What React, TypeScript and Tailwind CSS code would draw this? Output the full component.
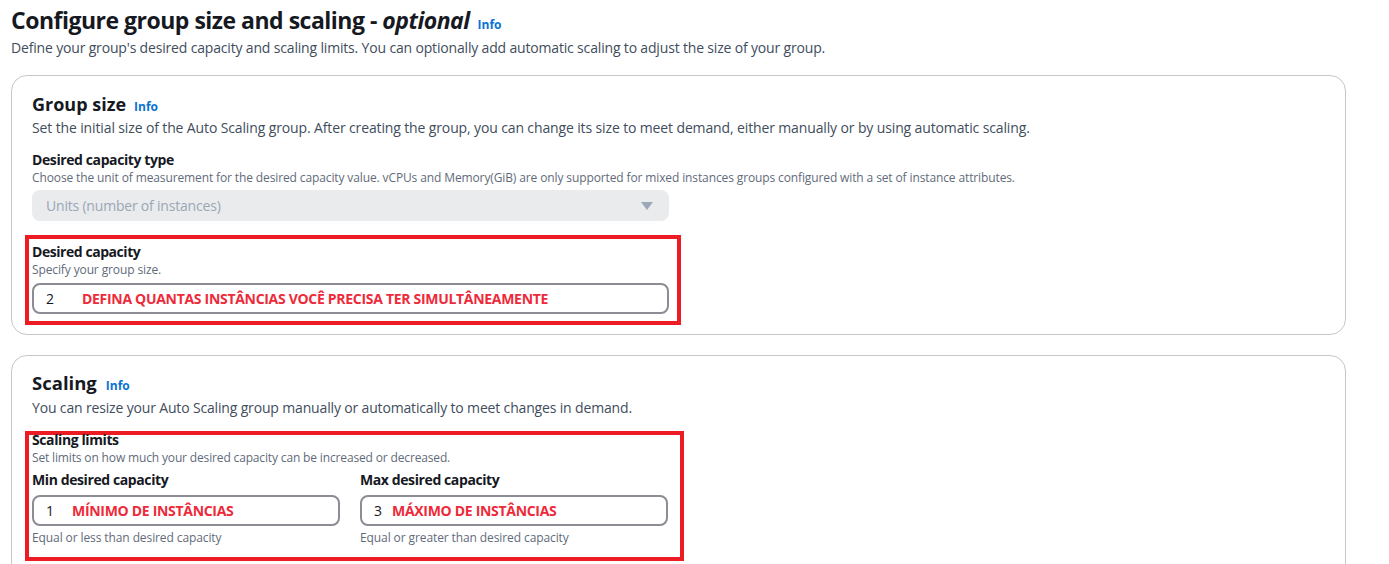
import React from "react";

const Info = ({ cls = "" }: { cls?: string }) => (
  <span className={`text-[12px] leading-none font-bold tracking-normal text-[#0972d3] ${cls}`}>Info</span>
);

const RedText = ({ children }: { children: React.ReactNode }) => (
  <span className="font-bold text-[14px] leading-none tracking-[-0.3px] text-[#ee2a3a]">{children}</span>
);

export default function App() {
  return (
    <div
      className="w-[1389px] h-[564px] overflow-hidden bg-white text-[#16191f]"
      style={{ fontFamily: '"Open Sans", "Noto Sans", sans-serif' }}
    >
      <div className="pl-[11px] pr-[43px] pt-[4px]">
        <h1 className="flex h-[32px] items-baseline gap-[8px] text-[23px] font-bold leading-[32px] tracking-[-0.5px]">
          <span>
            Configure group size and scaling - <i>optional</i>
          </span>
          <Info />
        </h1>
        <p className="mt-[2px] text-[14px] leading-[20px] tracking-[-0.17px] text-[#414d5c]">
          Define your group's desired capacity and scaling limits. You can optionally add automatic scaling to adjust the size of your group.
        </p>

        {/* Card 1 */}
        <div className="mt-[17px] h-[260px] rounded-[16px] border border-[#c6c6cd] pl-[20px] pt-[15px]">
          <h2 className="flex h-[26px] items-baseline gap-[8px] text-[18px] font-bold leading-[26px]">
            <span>Group size</span>
            <Info />
          </h2>
          <p className="mt-[1px] text-[14px] leading-[20px] tracking-[-0.13px] text-[#414d5c]">
            Set the initial size of the Auto Scaling group. After creating the group, you can change its size to meet demand, either manually or by using automatic scaling.
          </p>
          <div className="mt-[12px] text-[14px] font-bold leading-[20px] tracking-[-0.4px]">Desired capacity type</div>
          <div className="text-[12px] leading-[16px] tracking-[-0.12px] text-[#5f6b7a]">
            Choose the unit of measurement for the desired capacity value. vCPUs and Memory(GiB) are only supported for mixed instances groups configured with a set of instance attributes.
          </div>
          <div className="mt-[4px] flex h-[31px] w-[637px] items-center justify-between rounded-[8px] bg-[#e9ebed] pl-[14px] pr-[16px]">
            <span className="text-[14px] tracking-[-0.2px] text-[#9ba7b6]">Units (number of instances)</span>
            <svg width="12" height="8" viewBox="0 0 12 8">
              <polygon points="0,0 12,0 6,8" fill="#9ba7b6" />
            </svg>
          </div>

          <div className="ml-[-7px] mt-[14px] h-[90px] w-[656px] border-[4px] border-[#ed1c24] pl-[3px] pt-[3px]">
            <div className="text-[14px] font-bold leading-[20px] tracking-[-0.45px]">Desired capacity</div>
            <div className="text-[12px] leading-[16px] tracking-[-0.12px] text-[#5f6b7a]">Specify your group size.</div>
            <div className="mt-[5px] flex h-[31px] w-[637px] items-center rounded-[8px] border-[2px] border-[#8c8c94] pl-[12px]">
              <span className="w-[36px] text-[14px]">2</span>
              <RedText>DEFINA QUANTAS INSTÂNCIAS VOCÊ PRECISA TER SIMULTÂNEAMENTE</RedText>
            </div>
          </div>
        </div>

        {/* Card 2 */}
        <div className="mt-[20px] h-[260px] rounded-t-[16px] border border-[#c6c6cd] pl-[20px] pt-[13px]">
          <h2 className="flex h-[28px] items-baseline gap-[9px] text-[18.5px] font-bold leading-[28px]">
            <span>Scaling</span>
            <Info />
          </h2>
          <p className="text-[14px] leading-[22px] tracking-[-0.16px] text-[#414d5c]">
            You can resize your Auto Scaling group manually or automatically to meet changes in demand.
          </p>
          <div className="ml-[-7px] mt-[12px] h-[130px] w-[659px] border-[4px] border-[#ed1c24] pl-[3px]">
            <div className="mt-[-4px] text-[14px] font-bold leading-[18px] tracking-[-0.4px]">Scaling limits</div>
            <div className="text-[12px] leading-[18px] tracking-[-0.15px] text-[#5f6b7a]">
              Set limits on how much your desired capacity can be increased or decreased.
            </div>
            <div className="mt-[3px] flex gap-[20px]">
              {[
                { label: "Min desired capacity", v: "1", red: "MÍNIMO DE INSTÂNCIAS", help: "Equal or less than desired capacity", w: "w-[26px]" },
                { label: "Max desired capacity", v: "3", red: "MÁXIMO DE INSTÂNCIAS", help: "Equal or greater than desired capacity", w: "w-[18px]" },
              ].map((f) => (
                <div key={f.label} className="w-[308px]">
                  <div className="text-[14px] font-bold leading-[20px] tracking-[-0.4px]">{f.label}</div>
                  <div className="mt-[5px] flex h-[31px] items-center rounded-[8px] border-[2px] border-[#8c8c94] pl-[12px]">
                    <span className={`${f.w} text-[14px]`}>{f.v}</span>
                    <RedText>{f.red}</RedText>
                  </div>
                  <div className="mt-[3px] text-[12px] leading-[18px] tracking-[-0.1px] text-[#5f6b7a]">{f.help}</div>
                </div>
              ))}
            </div>
          </div>
        </div>
      </div>
    </div>
  );
}
